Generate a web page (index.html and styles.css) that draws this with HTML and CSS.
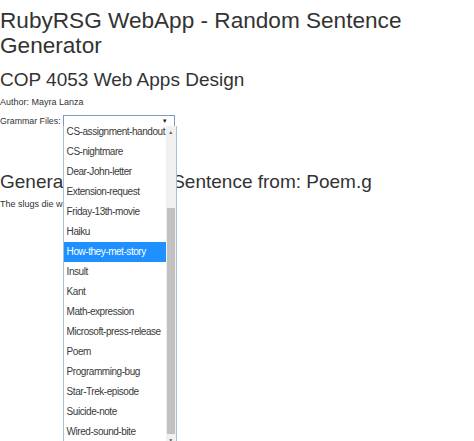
FILE: index.html
```html
<!DOCTYPE html>
<html>
<head>
<meta charset="utf-8">
<link rel="stylesheet" href="styles.css">
</head>
<body>
<div class="page">
  <h1 class="title">RubyRSG WebApp - Random Sentence Generator</h1>
  <h2 class="subtitle">COP 4053 Web Apps Design</h2>
  <p class="author">Author: Mayra Lanza</p>
  <div class="form-row">
    <label class="label">Grammar Files:</label>
    <div class="select-wrap">
      <div class="select"><span class="arrow">▼</span></div>
      <div class="dropdown">
        <ul class="options">
          <li>CS-assignment-handout</li>
          <li>CS-nightmare</li>
          <li>Dear-John-letter</li>
          <li>Extension-request</li>
          <li>Friday-13th-movie</li>
          <li>Haiku</li>
          <li class="active">How-they-met-story</li>
          <li>Insult</li>
          <li>Kant</li>
          <li>Math-expression</li>
          <li>Microsoft-press-release</li>
          <li>Poem</li>
          <li>Programming-bug</li>
          <li>Star-Trek-episode</li>
          <li>Suicide-note</li>
          <li>Wired-sound-bite</li>
        </ul>
        <div class="scrollbar">
          <span class="sb-up">▲</span>
          <div class="sb-thumb"></div>
          <span class="sb-down">▼</span>
        </div>
      </div>
    </div>
  </div>
  <h2 class="generated">Generated Random Sentence from: Poem.g</h2>
  <p class="sentence">The slugs die wailing in the night.</p>
</div>
</body>
</html>
```

FILE: styles.css
```css
html, body {
  margin: 0;
  padding: 0;
  background: #fff;
  overflow: hidden;
}
body {
  font-family: "Liberation Sans", Arial, sans-serif;
  color: #333;
}
.page {
  padding: 8px 0 0 0;
  min-height: 441px;
  box-sizing: border-box;
}
.title {
  font-size: 22.6px;
  font-weight: normal;
  line-height: 25px;
  margin: 0;
  width: 430px;
}
.subtitle {
  font-size: 19px;
  font-weight: normal;
  line-height: 22px;
  margin: 11px 0 0 0;
}
.author {
  font-size: 9px;
  line-height: 12px;
  margin: 5px 0 0 0;
}
.form-row {
  display: flex;
  align-items: center;
  margin-top: 7px;
  font-size: 8.8px;
  line-height: 12px;
}
.label {
  margin-right: 2px;
}
.select-wrap {
  position: relative;
}
.select {
  width: 110px;
  height: 10px;
  border: 1px solid #7f9db9;
  background: #fff;
  position: relative;
}
.arrow {
  position: absolute;
  right: 6px;
  top: 1px;
  font-size: 6px;
  line-height: 8px;
  color: #222;
}
.dropdown {
  position: absolute;
  left: 0;
  top: 11px;
  width: 112px;
  height: 320px;
  border: 1px solid #a8bfdc;
  border-top: none;
  background: #fff;
  display: flex;
  overflow: hidden;
  z-index: 2;
}
.options {
  list-style: none;
  margin: -4px 0 0 0;
  padding: 0;
  flex: 1;
  min-width: 0;
  overflow: hidden;
  font-size: 10px;
  letter-spacing: -0.45px;
  color: #3a3a3a;
}
.options li {
  height: 20px;
  line-height: 20px;
  padding-left: 3px;
  white-space: nowrap;
}
.options li.active {
  background: #1e90ff;
  color: #fff;
}
.scrollbar {
  width: 10px;
  flex: none;
  background: #f0f0f0;
  display: flex;
  flex-direction: column;
  align-items: center;
}
.sb-up, .sb-down {
  font-size: 5px;
  line-height: 12px;
  height: 12px;
  color: #606060;
}
.sb-thumb {
  width: 8px;
  margin-top: 70px;
  flex: 1;
  background: #c1c1c1;
}
.generated {
  font-size: 19px;
  font-weight: normal;
  line-height: 22px;
  margin: 44px 0 0 0;
}
.sentence {
  font-size: 9px;
  line-height: 12px;
  margin: 5px 0 0 0;
}
```
